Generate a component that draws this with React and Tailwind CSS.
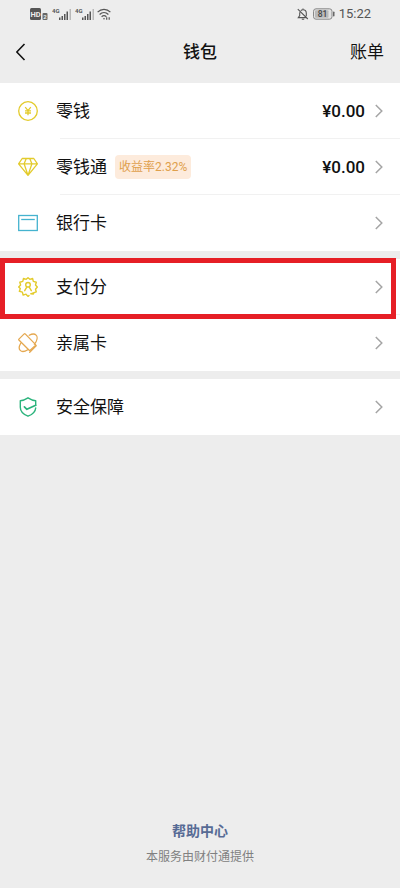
import React from 'react';

function CoinIcon() {
  return (
    <svg className="w-5 h-5 text-[#e3cb2c]" viewBox="0 0 20 20" fill="none" stroke="currentColor" strokeWidth="1.3" aria-hidden="true">
      <circle cx="10" cy="10" r="9.3" />
      <path d="M7.2 6.2 10 9.6l2.8-3.4M10 9.6v4.6M7 9.8h6M7 12h6" />
    </svg>
  );
}

function DiamondIcon() {
  return (
    <svg className="w-5 h-5 text-[#e3cb2c]" viewBox="0 0 20 20" fill="none" stroke="currentColor" strokeWidth="1.3" strokeLinejoin="round" aria-hidden="true">
      <path d="M4.2 1.5h11.6l3.6 5.3L10 18.4.6 6.8zM.6 6.8h18.8M6.1 6.8 10 18.4l3.9-11.6M6.1 6.8l2.2-5.3M13.9 6.8l-2.2-5.3" />
    </svg>
  );
}

function BankCardIcon() {
  return (
    <svg className="w-5 h-5 text-[#45b3cf]" viewBox="0 0 20 20" fill="none" stroke="currentColor" strokeWidth="1.3" aria-hidden="true">
      <rect x=".7" y="2.5" width="18.6" height="15" />
      <path d="M3.2 6.5h13.6" />
    </svg>
  );
}

function ScoreIcon() {
  return (
    <svg className="w-5 h-5 text-[#e3cb2c]" viewBox="0 0 20 20" fill="none" stroke="currentColor" strokeWidth="1.4" strokeLinejoin="round" strokeLinecap="round" aria-hidden="true">
      <path d="M15.9 15.6 15.4 17l-2.6-.3M11 18.4l-1 1-2-2.2-2.9.9-.7-3-3-.8.9-2.8L.7 10l1.9-2-.8-2.8 3-.8.7-3 2.7.9L10 .7l1.9 1.6 2.7-.9.7 3 3 .8-.8 2.8 1.8 2-1.8 2.3.8 2.6-4.4 1.4" />
      <circle cx="10" cy="7.8" r="2.3" />
      <path d="M8.9 9.9 6.7 13.7M11.1 9.9l2.2 3.8" />
    </svg>
  );
}

function FamilyCardIcon() {
  return (
    <svg className="w-5 h-5 text-[#e5a850]" viewBox="0 0 20 20" fill="none" stroke="currentColor" strokeWidth="1.3" strokeLinejoin="round" strokeLinecap="round" aria-hidden="true">
      <path d="M.9 6.1 6.2.9q.5-.4 1 0l10.2 10.5q.5.5 0 1l-5.2 4.9q-.5.4-1 0L.9 7q-.4-.5 0-.9z" />
      <path d="M11.2 2.3c2.8-1.5 5.5-1.6 6.9-.2 1.8 1.8 1 5.7-1.7 9.1M2.7 10.2c-1.7 3-1.9 5.8-.5 7.2 1.5 1.5 4.6 1.2 7.6-.7" />
      <path d="m11.7 19.2 6.5-6.4" />
    </svg>
  );
}

function ShieldIcon() {
  return (
    <svg className="w-5 h-5 text-[#2bb37c]" viewBox="0 0 20 20" fill="none" stroke="currentColor" strokeWidth="1.4" strokeLinejoin="round" strokeLinecap="round" aria-hidden="true">
      <path d="M17.7 8.3V3.7C14.8 3.5 12.200 2.200 10 .8 7.800 2.200 5.200 3.500 2.300 3.700v6.600c0 4.200 3.200 7.200 7.700 8.900 4-1.500 7.400-4.100 7.700-8.200" />
      <path d="m6.400 9.900 2.500 2.400 8.800-4" strokeWidth="1.7" />
    </svg>
  );
}

function ChevronRight() {
  return (
    <svg className="w-2 h-[14px] text-[#a5a5a5]" viewBox="0 0 8 14" fill="none" stroke="currentColor" strokeWidth="1.5" aria-hidden="true">
      <path d="m.8 1 6 6-6 6" />
    </svg>
  );
}

function Signal() {
  return (
    <svg className="w-5 h-3 text-[#555555]" viewBox="0 0 20 12" fill="currentColor" aria-hidden="true">
      <text x="0" y="5" fontSize="6" fontWeight="700" fontFamily="Roboto, sans-serif">4G</text>
      <path d="M7 9.5h1.5V12H7zM9.5 8H11v4H9.5zM12 6h1.5v6H12zM14.5 3.500H16V12h-1.500z" />
      <path d="M17.5 1H19v11h-1.5z" opacity=".35" />
    </svg>
  );
}

function StatusBar() {
  return (
    <div className="flex items-center justify-between h-7 pl-[30px] pr-[29px] text-[#555555]">
      <div className="flex items-center">
        <svg className="w-[18px] h-3 mr-1" viewBox="0 0 18 12" aria-hidden="true">
          <rect x="0" y="0" width="11" height="12" rx="1.5" fill="#555" />
          <text x="5.5" y="8.8" textAnchor="middle" fontSize="7.5" fontWeight="700" fontFamily="Roboto, sans-serif" fill="#ededed">HD</text>
          <rect x="12.5" y="5" width="5" height="7" rx="1" fill="#666" />
          <text x="15" y="10.700" textAnchor="middle" fontSize="6" fontWeight="700" fontFamily="Roboto, sans-serif" fill="#ededed">2</text>
        </svg>
        <div className="flex gap-[3px] mr-[2px]">
          <Signal />
          <Signal />
        </div>
        <svg className="w-[14px] h-3" viewBox="0 0 14 12" fill="none" stroke="currentColor" strokeWidth="1.2" aria-hidden="true">
          <path d="M.6 4.2C4.2.5 9.8.5 13.4 4.2M2.600 6.500c2.600-2.500 6.200-2.500 8.800 0M4.600 8.700c1.400-1.300 3.400-1.300 4.800 0" />
          <circle cx="7" cy="10.8" r=".8" fill="currentColor" stroke="none" />
          <path d="M9.7 9.300v2.400M12.200 9.300v2.400" />
        </svg>
      </div>
      <div className="flex items-center">
        <svg className="w-3 h-3 mr-1" viewBox="0 0 12 12" fill="none" stroke="currentColor" strokeWidth="1.1" aria-hidden="true">
          <path d="m.8 1.2 10 9.800M3.800 2.700C4.400 2 5.200 1.700 6 1.700c2 0 3.300 1.500 3.300 3.500v3M2.700 4.300v3.200L1.300 9.600h7.400M4.800 11.200h2.400M6 .5v1" />
        </svg>
        <svg className="w-[22px] h-3 mr-1" viewBox="0 0 22 12" aria-hidden="true">
          <rect x=".5" y=".8" width="18.5" height="10.4" rx="2.5" fill="#e2e2e2" stroke="#888" />
          <rect x="2" y="2.3" width="13.5" height="7.4" rx="1" fill="#b9b9b9" />
          <rect x="20" y="3.5" width="1.5" height="5" rx=".7" fill="#666" />
          <text x="9.5" y="9" textAnchor="middle" fontSize="8.5" fontWeight="500" fontFamily="Roboto, sans-serif" fill="#444">81</text>
        </svg>
        <span className="text-[13px] leading-4">15:22</span>
      </div>
    </div>
  );
}

const groups = [
  [
    { label: '零钱', icon: CoinIcon, amount: '¥0.00' },
    { label: '零钱通', icon: DiamondIcon, amount: '¥0.00', tag: '收益率2.32%' },
    { label: '银行卡', icon: BankCardIcon }
  ],
  [
    { label: '支付分', icon: ScoreIcon, highlighted: true },
    { label: '亲属卡', icon: FamilyCardIcon }
  ],
  [
    { label: '安全保障', icon: ShieldIcon }
  ]
];

function WalletRow({ item }) {
  const Icon = item.icon;
  return (
    <li className="relative">
      <button type="button" className="flex items-center w-full h-14 pl-[18px] pr-[17px] text-left">
        <Icon />
        <span className="ml-[18px] text-[17px] leading-6">{item.label}</span>
        {item.tag && (
          <span className="ml-2 px-1 rounded-sm bg-[#fdebdc] text-[#dfa04c] text-xs leading-6">{item.tag}</span>
        )}
        <span className="ml-auto mr-[10px] text-[17px] leading-6 font-medium">{item.amount}</span>
        <ChevronRight />
      </button>
      {item.highlighted && (
        <div className="absolute -top-px left-0 right-1 -bottom-1 z-10 border-5 border-[#e61f26] pointer-events-none" />
      )}
    </li>
  );
}

function App() {
  return (
    <div className="flex flex-col min-h-screen bg-[#ededed] text-[#111111] font-[Roboto,'Noto_Sans_CJK_SC',sans-serif]">
      <StatusBar />
      <header className="grid grid-cols-3 items-center h-12 mb-[7px] px-4 text-[17px] leading-6">
        <button type="button" aria-label="返回" className="justify-self-start">
          <svg className="w-[10px] h-[18px]" viewBox="0 0 10 18" fill="none" stroke="currentColor" strokeWidth="1.6" aria-hidden="true">
            <path d="M8.500 1 .8 9l7.700 8" />
          </svg>
        </button>
        <h1 className="text-center font-medium">钱包</h1>
        <button type="button" className="justify-self-end">账单</button>
      </header>

      <main className="flex flex-col gap-2">
        {groups.map((items, i) => (
          <ul key={i} className="bg-white">
            {items.map((item, j) => (
              <React.Fragment key={item.label}>
                {j > 0 && <li role="separator" className="h-px -mt-px ml-[60px] bg-[#f1f1f1]" />}
                <WalletRow item={item} />
              </React.Fragment>
            ))}
          </ul>
        ))}
      </main>

      <footer className="flex flex-col items-center gap-1 mt-auto pt-8 pb-[21px]">
        <a href="#help" className="text-sm leading-6 font-bold text-[#576b95]">帮助中心</a>
        <p className="text-xs leading-5 text-[#808080]">本服务由财付通提供</p>
      </footer>
    </div>
  );
}

export default App;
